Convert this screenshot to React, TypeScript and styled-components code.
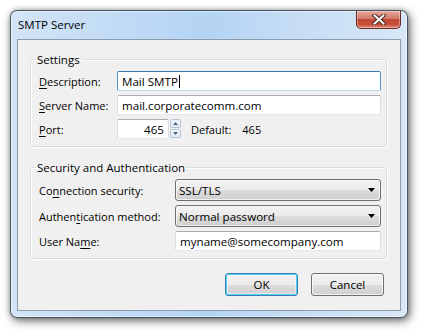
import { memo } from 'react';
import { createGlobalStyle, styled } from 'styled-components';

const GlobalStyle = createGlobalStyle`
  html, body {
    margin: 0;
    padding: 0;
    background: #ffffff;
  }

  body {
    font-family: 'Open Sans', 'Noto Sans', sans-serif;
    font-size: 11px;
    color: #000000;
  }
`;

const SPage = styled.div`
  width: 421px;
  height: 331px;
  padding: 10px 0 0 10px;
  box-sizing: border-box;
`;

const SWindow = styled.div`
  width: 398px;
  height: 308px;
  box-sizing: border-box;
  display: flex;
  flex-direction: column;
  padding: 0 6px 6px;
  border: 1px solid rgba(30, 42, 58, 0.78);
  border-radius: 7px;
  background: linear-gradient(to right, #d3e4f6 0%, #bcd8f5 35%, #b4d4f4 50%, #c6ddf5 72%, #d8e7f7 100%);
  box-shadow:
    inset 0 0 0 1px rgba(255, 255, 255, 0.55),
    2px 3px 10px rgba(0, 0, 0, 0.55),
    0 0 5px rgba(0, 0, 0, 0.25);
`;

const STitleBar = styled.div`
  height: 28px;
  display: flex;
  align-items: flex-start;
  justify-content: space-between;
  flex-shrink: 0;
`;

const STitle = styled.span`
  padding: 6px 0 0 1px;
  font-size: 11.5px;
  line-height: 15px;
  color: #000000;
`;

const SCloseButton = styled.div`
  width: 45px;
  height: 18px;
  display: flex;
  align-items: center;
  justify-content: center;
  box-sizing: border-box;
  border: 1px solid #6b2a23;
  border-top: none;
  border-radius: 0 0 5px 5px;
  background: linear-gradient(to bottom, #e7a89c 0%, #d3786a 45%, #c14a35 50%, #c8503a 80%, #e09080 100%);
  box-shadow: inset 0 0 0 1px rgba(255, 255, 255, 0.35);
`;

const SClient = styled.div`
  flex: 1;
  display: flex;
  flex-direction: column;
  box-sizing: border-box;
  padding: 12px 13px 14px 12px;
  background: #f0f0f0;
  border: 1px solid #8d9cad;
`;

const SGroup = styled.fieldset<{ $gap?: number }>`
  margin: 0 0 ${({ $gap }) => $gap ?? 0}px;
  padding: 4px 5px 7px 7px;
  border: 1px solid #d5dfe5;
  border-radius: 3px;
  box-shadow: inset 1px 1px 0 #ffffff, 1px 1px 0 #ffffff;
  display: flex;
  flex-direction: column;
  gap: 4px;
`;

const SLegend = styled.legend`
  padding: 0 2px;
  margin-left: -3px;
  line-height: 15px;
  font-size: 11.5px;
`;

const SRow = styled.div<{ $labelWidth: number }>`
  display: grid;
  grid-template-columns: ${({ $labelWidth }) => $labelWidth}px 1fr;
  align-items: center;
`;

const SLabel = styled.span`
  padding-left: 1px;
  line-height: 15px;
  white-space: nowrap;

  u {
    text-decoration: underline;
    text-underline-offset: 2px;
  }
`;

const STextBox = styled.div<{ $focused?: boolean; $width?: number; $align?: string }>`
  height: 20px;
  width: ${({ $width }) => ($width ? `${$width}px` : 'auto')};
  box-sizing: border-box;
  display: flex;
  align-items: center;
  justify-content: ${({ $align }) => ($align === 'right' ? 'flex-end' : 'flex-start')};
  padding: 0 4px;
  background: #ffffff;
  border: 1px solid ${({ $focused }) => ($focused ? '#5693c6' : '#dbdfe6')};
  border-top-color: ${({ $focused }) => ($focused ? '#3d7bad' : '#abadb3')};
  border-bottom-color: ${({ $focused }) => ($focused ? '#b7d9ed' : '#e3e9ef')};
  border-radius: 2px;
  font-size: 11.6px;
  line-height: 15px;
  white-space: nowrap;
`;

const SCaret = styled.span`
  display: inline-block;
  width: 1px;
  height: 13px;
  margin-left: 1px;
  background: #000000;
`;

const SPortRow = styled.div`
  display: flex;
  align-items: center;
`;

const SSpin = styled.div`
  display: flex;
  flex-direction: column;
  gap: 1px;
  margin-left: 1px;
  height: 20px;
`;

const SSpinButton = styled.div`
  width: 11px;
  height: 9px;
  display: flex;
  align-items: center;
  justify-content: center;
  box-sizing: border-box;
  border: 1px solid #b7c6d8;
  border-radius: 2px;
  background: linear-gradient(to bottom, #f4f8fc, #dde7f2);
`;

const SDefault = styled.span`
  margin-left: 10px;
  line-height: 15px;
`;

const SDefaultValue = styled.span`
  margin-left: 11px;
  line-height: 15px;
`;

const SSelect = styled.div`
  height: 22px;
  box-sizing: border-box;
  display: flex;
  align-items: center;
  justify-content: space-between;
  padding: 0 5px 0 3px;
  border: 1px solid #707070;
  border-radius: 3px;
  background: linear-gradient(to bottom, #f2f2f2 0%, #ebebeb 50%, #dddddd 51%, #cfcfcf 100%);
  box-shadow: inset 0 0 0 1px rgba(255, 255, 255, 0.7);
  font-size: 11.6px;
  line-height: 15px;
`;

const SButtonBar = styled.div`
  margin-top: auto;
  display: flex;
  justify-content: flex-end;
  gap: 13px;
  padding-right: 3px;
`;

const SButton = styled.div<{ $default?: boolean }>`
  width: 73px;
  height: 23px;
  box-sizing: border-box;
  display: flex;
  align-items: center;
  justify-content: center;
  border: 1px solid ${({ $default }) => ($default ? '#3c7fb1' : '#707070')};
  border-radius: 3px;
  background: linear-gradient(to bottom, #f2f2f2 0%, #ebebeb 50%, #dddddd 51%, #cfcfcf 100%);
  box-shadow: ${({ $default }) =>
    $default ? 'inset 0 0 0 1px #48d0f5, inset 0 0 0 2px rgba(255,255,255,0.5)' : 'inset 0 0 0 1px rgba(255,255,255,0.7)'};
  font-size: 11.5px;
  line-height: 15px;
`;

const CloseIcon = () => (
  <svg width='14' height='11' viewBox='0 0 14 11'>
    <path d='M2.5 1.5 L11.5 9.5 M11.5 1.5 L2.5 9.5' stroke='#4a2620' strokeWidth='4' strokeLinecap='square' />
    <path d='M2.5 1.5 L11.5 9.5 M11.5 1.5 L2.5 9.5' stroke='#ffffff' strokeWidth='2' strokeLinecap='square' />
  </svg>
);

const Arrow = ({ up, size = 5, color = '#000000' }: { up?: boolean; size?: number; color?: string }) => (
  <svg width={size * 2 - 1} height={size} viewBox={`0 0 ${size * 2 - 1} ${size}`}>
    <path
      d={up ? `M0 ${size} L${size - 0.5} 0 L${size * 2 - 1} ${size} Z` : `M0 0 L${size * 2 - 1} 0 L${size - 0.5} ${size} Z`}
      fill={color}
    />
  </svg>
);

const App = () => (
  <SPage>
    <GlobalStyle />
    <SWindow>
      <STitleBar>
        <STitle>SMTP Server</STitle>
        <SCloseButton>
          <CloseIcon />
        </SCloseButton>
      </STitleBar>
      <SClient>
        <SGroup $gap={13}>
          <SLegend>Settings</SLegend>
          <SRow $labelWidth={79}>
            <SLabel>
              <u>D</u>escription:
            </SLabel>
            <STextBox $focused>
              Mail SMTP
              <SCaret />
            </STextBox>
          </SRow>
          <SRow $labelWidth={79}>
            <SLabel>
              <u>S</u>erver Name:
            </SLabel>
            <STextBox>mail.corporatecomm.com</STextBox>
          </SRow>
          <SRow $labelWidth={79}>
            <SLabel>
              <u>P</u>ort:
            </SLabel>
            <SPortRow>
              <STextBox $width={52} $align='right'>
                465
              </STextBox>
              <SSpin>
                <SSpinButton>
                  <Arrow up size={3} color='#4d6185' />
                </SSpinButton>
                <SSpinButton>
                  <Arrow size={3} color='#4d6185' />
                </SSpinButton>
              </SSpin>
              <SDefault>Default:</SDefault>
              <SDefaultValue>465</SDefaultValue>
            </SPortRow>
          </SRow>
        </SGroup>
        <SGroup>
          <SLegend>Security and Authentication</SLegend>
          <SRow $labelWidth={137}>
            <SLabel>
              Co<u>n</u>nection security:
            </SLabel>
            <SSelect>
              SSL/TLS
              <Arrow size={4} />
            </SSelect>
          </SRow>
          <SRow $labelWidth={137}>
            <SLabel>
              Authen<u>t</u>ication method:
            </SLabel>
            <SSelect>
              Normal password
              <Arrow size={4} />
            </SSelect>
          </SRow>
          <SRow $labelWidth={137}>
            <SLabel>
              User Na<u>m</u>e:
            </SLabel>
            <STextBox>myname@somecompany.com</STextBox>
          </SRow>
        </SGroup>
        <SButtonBar>
          <SButton $default>OK</SButton>
          <SButton>Cancel</SButton>
        </SButtonBar>
      </SClient>
    </SWindow>
  </SPage>
);

export default memo(App);
